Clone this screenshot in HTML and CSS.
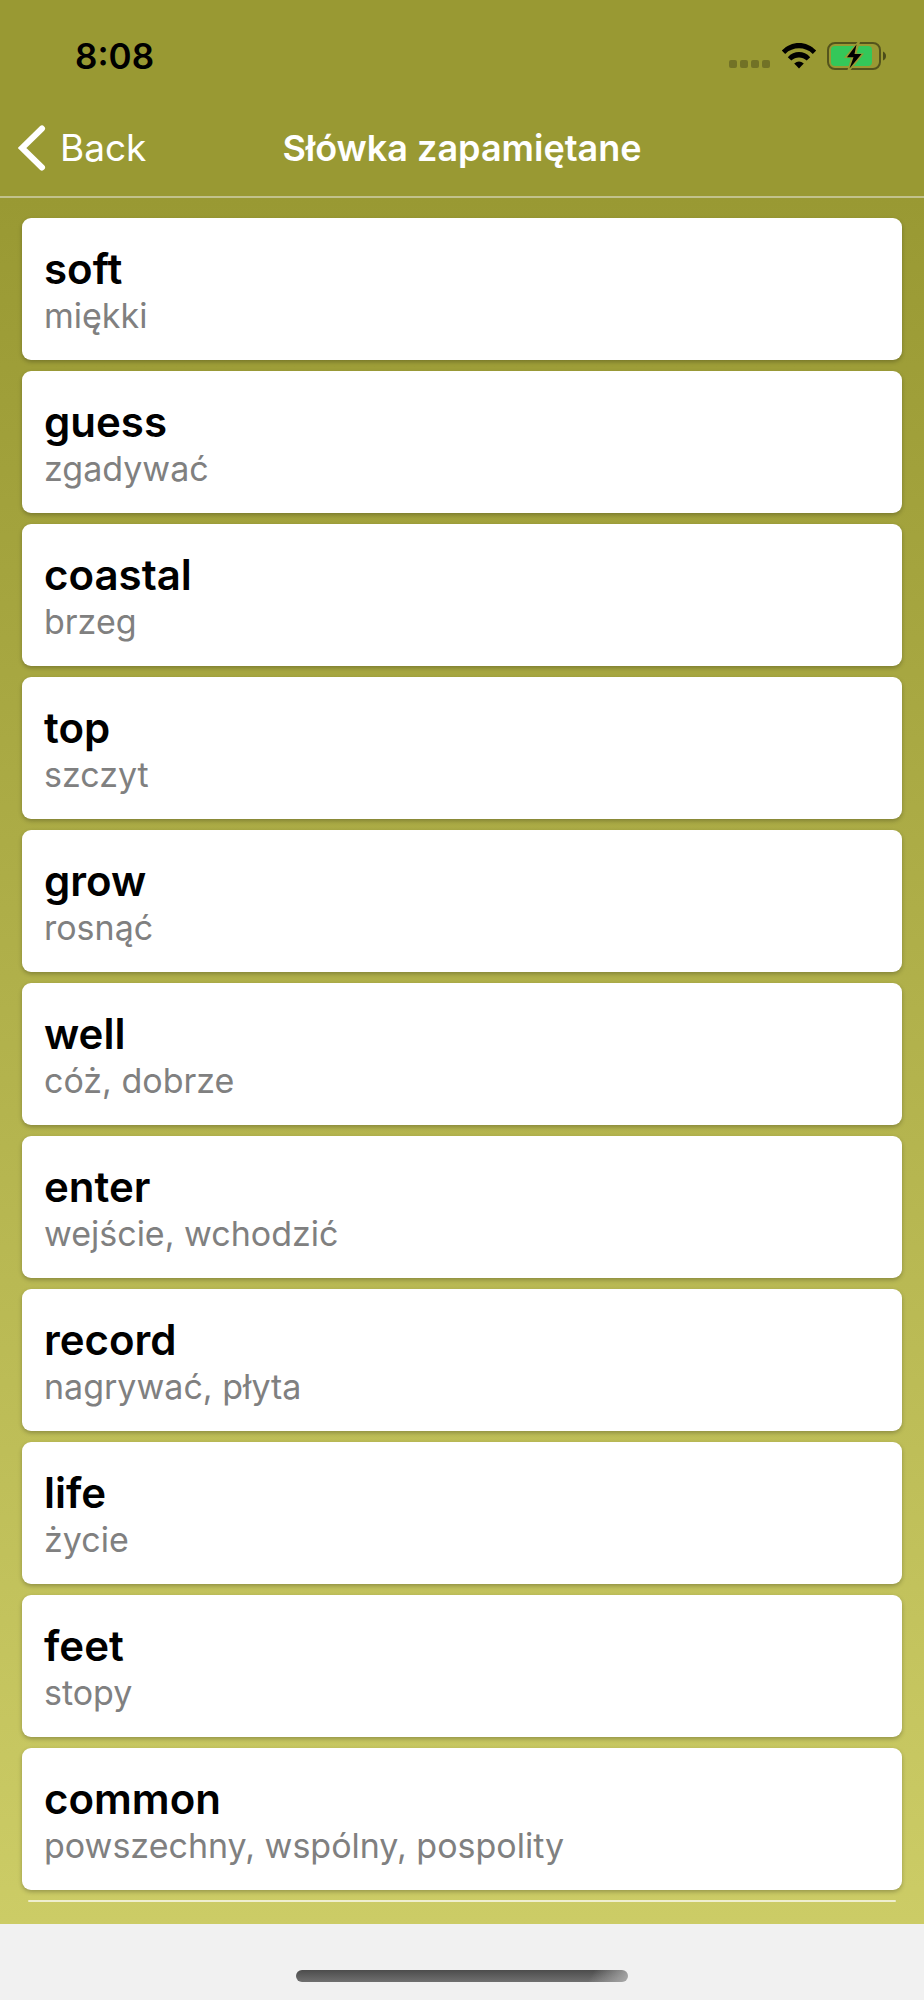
FILE: index.html
```html
<!DOCTYPE html>
<html lang="pl">
<head>
<meta charset="utf-8">
<meta name="viewport" content="width=device-width, initial-scale=1">
<title>Słówka zapamiętane</title>
<link rel="stylesheet" href="styles.css">
</head>
<body>
<div class="screen">
  <header class="header">
    <div class="status">
      <time class="clock">8:08</time>
      <div class="indicators">
        <svg class="signal" viewBox="0 0 42 8" aria-hidden="true"><g fill="#000" fill-opacity=".25"><rect width="8" height="8" rx="2"/><rect x="11" width="8" height="8" rx="2"/><rect x="22" width="8" height="8" rx="2"/><rect x="33" width="8" height="8" rx="2"/></g></svg>
        <svg class="wifi" viewBox="0 0 36 28" aria-hidden="true"><path d="M.8 8.600C10.300-1.700 25.700-1.700 35.200 8.600L31.800 11.900C24.200 4.500 11.800 4.500 4.200 11.900Z"/><path d="M6.800 15.200C13 8.400 23 8.400 29.200 15.200L25.700 18.500C21.300 14.500 14.700 14.500 10.300 18.500Z"/><path d="M13.200 21.400Q18 17.600 22.800 21.400L18 26.600Z"/></svg>
        <svg class="battery" viewBox="0 0 60 30" aria-hidden="true">
          <rect x="1" y="2" width="52" height="26" rx="7" fill="none" stroke="#000" stroke-opacity=".45" stroke-width="2"/>
          <path d="M56 10.500Q59 12 59 15T56 19.500Z" fill="#000" fill-opacity=".5"/>
          <rect x="4" y="5" width="41" height="20" rx="4" fill="#34c759"/>
          <path d="M30.500 1L17 17H24L20.500 29H23.500L37 12.500H29.500L33 1Z" fill="#999933"/>
          <path d="M29.500 3.500L20 16.300H26.500L22.500 27.500L34.500 13H27.500Z"/>
        </svg>
      </div>
    </div>
    <nav class="navbar">
      <a class="back" href="#"><svg class="chevron" viewBox="0 0 28 46" aria-hidden="true"><path d="M24 3.500L4 23L24 42.500" fill="none" stroke="#fff" stroke-width="6" stroke-linecap="round"/></svg>Back</a>
      <h1 class="title">Słówka zapamiętane</h1>
    </nav>
  </header>
  <main class="content">
    <ul class="words">
      <li class="card"><h2 class="word">soft</h2><p class="meaning">miękki</p></li>
      <li class="card"><h2 class="word">guess</h2><p class="meaning">zgadywać</p></li>
      <li class="card"><h2 class="word">coastal</h2><p class="meaning">brzeg</p></li>
      <li class="card"><h2 class="word">top</h2><p class="meaning">szczyt</p></li>
      <li class="card"><h2 class="word">grow</h2><p class="meaning">rosnąć</p></li>
      <li class="card"><h2 class="word">well</h2><p class="meaning">cóż, dobrze</p></li>
      <li class="card"><h2 class="word">enter</h2><p class="meaning">wejście, wchodzić</p></li>
      <li class="card"><h2 class="word">record</h2><p class="meaning">nagrywać, płyta</p></li>
      <li class="card"><h2 class="word">life</h2><p class="meaning">życie</p></li>
      <li class="card"><h2 class="word">feet</h2><p class="meaning">stopy</p></li>
      <li class="card"><h2 class="word">common</h2><p class="meaning">powszechny, wspólny, pospolity</p></li>
    </ul>
    <div class="next-edge"></div>
  </main>
  <footer class="footer"><div class="home-bar"></div></footer>
</div>
</body>
</html>
```
FILE: styles.css
```css
* {
  box-sizing: border-box;
}

body,
h1,
h2,
p,
ul {
  margin: 0;
  padding: 0;
}

body {
  font-family: Inter, "Liberation Sans", sans-serif;
  color: #000;
  background: #f1f1f1;
}

.screen {
  display: flex;
  flex-direction: column;
  min-height: 100vh;
}

.header {
  background: #999933;
  border-bottom: 2px solid #c2c28c;
}

.status {
  display: flex;
  justify-content: space-between;
  align-items: center;
  height: 100px;
  padding: 12px 37px 0 75px;
}

.clock {
  font-size: 35px;
  font-weight: 600;
  line-height: 44px;
}

.indicators {
  display: flex;
  align-items: center;
}

.signal {
  width: 42px;
  height: 8px;
  margin: 16px 10px 0 0;
}

.wifi {
  width: 36px;
  height: 28px;
  margin-right: 10px;
}

.battery {
  width: 60px;
  height: 30px;
}

.navbar {
  display: grid;
  grid-template-columns: 1fr auto 1fr;
  align-items: center;
  height: 96px;
  padding: 0 18px;
}

.back {
  display: flex;
  align-items: center;
  gap: 14px;
  color: #fff;
  font-size: 37px;
  line-height: 44px;
  text-decoration: none;
}

.chevron {
  width: 28px;
  height: 46px;
}

.title {
  color: #fff;
  font-size: 36px;
  font-weight: 600;
  line-height: 44px;
}

.content {
  flex: 1;
  padding: 20px 22px 22px;
  background: linear-gradient(#999933, #cccc66);
}

.words {
  display: flex;
  flex-direction: column;
  gap: 11px;
  list-style: none;
}

.card {
  padding: 26px 22px 22px;
  border-radius: 9px;
  background: #fff;
  box-shadow: 0 2px 4px rgba(0, 0, 0, 0.25);
}

.word {
  font-size: 42px;
  font-weight: 600;
  line-height: 50px;
}

.meaning {
  color: #808080;
  font-size: 34px;
  line-height: 44px;
}

.next-edge {
  height: 2px;
  margin: 10px 6px 0;
  border-radius: 2px;
  background: #efefcf;
}

.footer {
  display: flex;
  justify-content: center;
  padding: 46px 0 18px;
  background: #f1f1f1;
}

.home-bar {
  width: 36%;
  height: 12px;
  border-radius: 6px;
  background:
    linear-gradient(120deg, transparent 88%, #aaa),
    linear-gradient(#4c4c4c, #707070);
}
```
